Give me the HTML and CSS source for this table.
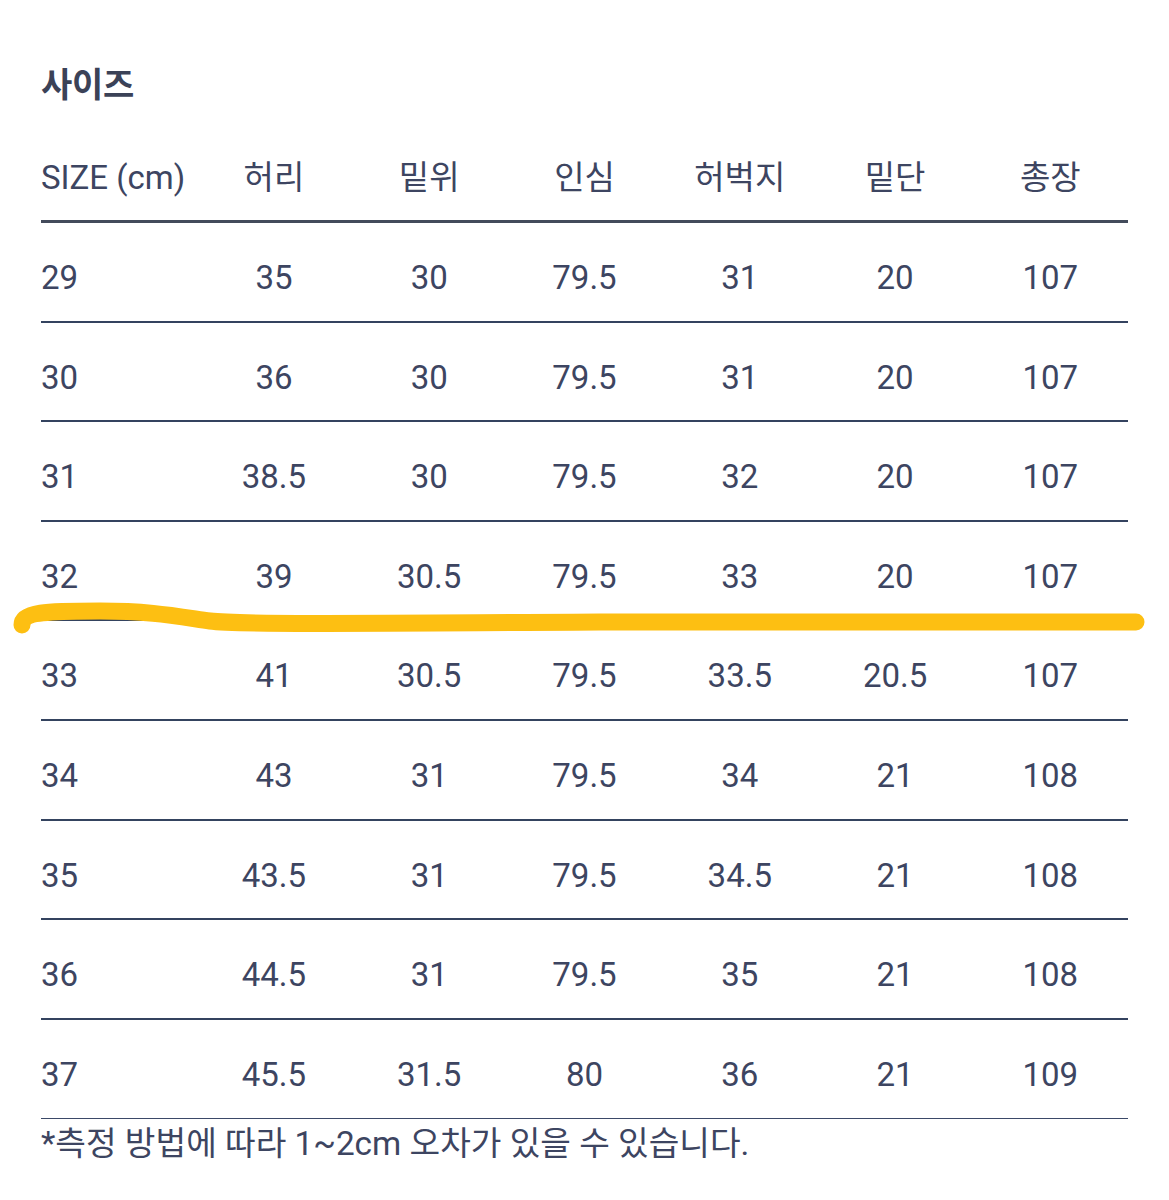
FILE: index.html
```html
<!DOCTYPE html>
<html lang="ko">
<head>
<meta charset="utf-8">
<link rel="stylesheet" href="styles.css">
</head>
<body>
<div class="page">
  <h2 class="title">사이즈</h2>
  <div class="table">
    <div class="row head">
      <div class="c first">SIZE (cm)</div><div class="c">허리</div><div class="c">밑위</div><div class="c">인심</div><div class="c">허벅지</div><div class="c">밑단</div><div class="c">총장</div>
    </div>
    <div class="row"><div class="c first">29</div><div class="c">35</div><div class="c">30</div><div class="c">79.5</div><div class="c">31</div><div class="c">20</div><div class="c">107</div></div>
    <div class="row"><div class="c first">30</div><div class="c">36</div><div class="c">30</div><div class="c">79.5</div><div class="c">31</div><div class="c">20</div><div class="c">107</div></div>
    <div class="row"><div class="c first">31</div><div class="c">38.5</div><div class="c">30</div><div class="c">79.5</div><div class="c">32</div><div class="c">20</div><div class="c">107</div></div>
    <div class="row"><div class="c first">32</div><div class="c">39</div><div class="c">30.5</div><div class="c">79.5</div><div class="c">33</div><div class="c">20</div><div class="c">107</div></div>
    <div class="row"><div class="c first">33</div><div class="c">41</div><div class="c">30.5</div><div class="c">79.5</div><div class="c">33.5</div><div class="c">20.5</div><div class="c">107</div></div>
    <div class="row"><div class="c first">34</div><div class="c">43</div><div class="c">31</div><div class="c">79.5</div><div class="c">34</div><div class="c">21</div><div class="c">108</div></div>
    <div class="row"><div class="c first">35</div><div class="c">43.5</div><div class="c">31</div><div class="c">79.5</div><div class="c">34.5</div><div class="c">21</div><div class="c">108</div></div>
    <div class="row"><div class="c first">36</div><div class="c">44.5</div><div class="c">31</div><div class="c">79.5</div><div class="c">35</div><div class="c">21</div><div class="c">108</div></div>
    <div class="row last"><div class="c first">37</div><div class="c">45.5</div><div class="c">31.5</div><div class="c">80</div><div class="c">36</div><div class="c">21</div><div class="c">109</div></div>
  </div>
  <p class="note">*측정 방법에 따라 1~2cm 오차가 있을 수 있습니다.</p>
</div>
<svg class="mark" width="1169" height="60" viewBox="0 590 1169 60">
  <path d="M22 625 C 22 612, 45 611, 100 611 C 150 611, 175 616, 210 621 C 240 625, 420 623, 600 622 L 1136 622" fill="none" stroke="#fdbf12" stroke-width="17" stroke-linecap="round" stroke-linejoin="round"/>
</svg>
</body>
</html>
```

FILE: styles.css
```css
html, body {
  margin: 0;
  padding: 0;
  background: #ffffff;
}
body {
  position: relative;
  width: 1169px;
  height: 1200px;
  overflow: hidden;
  color: #3d4561;
  font-family: Roboto, "Noto Sans CJK KR", sans-serif;
}
.page {
  padding: 64px 41px 0 41px;
}
.title {
  margin: 0;
  font-size: 34px;
  line-height: 42px;
  font-weight: 700;
  color: #3b4257;
  letter-spacing: -0.3px;
}
.table {
  margin-top: 52px;
  width: 1087px;
}
.row {
  display: grid;
  grid-template-columns: repeat(7, 1fr);
  box-sizing: border-box;
  height: 99.6px;
  padding-top: 35px;
  border-bottom: 2px solid #34435f;
  font-size: 33px;
  line-height: 40px;
}
.row.head {
  height: auto;
  padding-top: 0;
  padding-bottom: 22px;
  border-bottom: 3px solid #434b5b;
}
.row.last {
  border-bottom: 1.5px solid #3b4968;
}
.c {
  text-align: center;
  white-space: nowrap;
}
.c.first {
  text-align: left;
}
.note {
  margin: 4px 0 0 0;
  font-size: 33.3px;
  line-height: 42px;
}
.mark {
  position: absolute;
  left: 0;
  top: 590px;
}
```
